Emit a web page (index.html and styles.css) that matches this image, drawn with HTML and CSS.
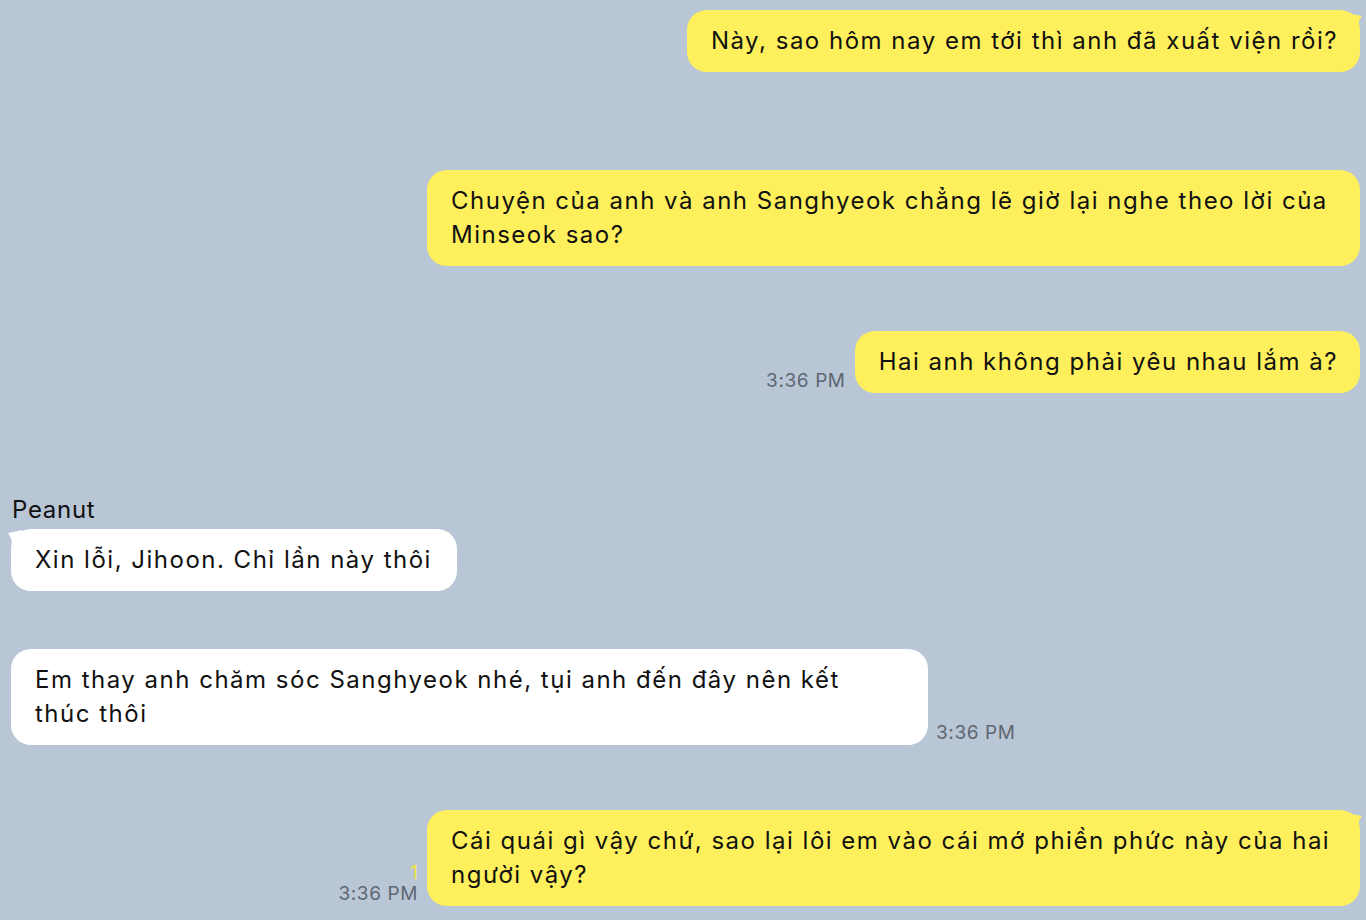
FILE: index.html
```html
<!DOCTYPE html>
<html lang="vi">
<head>
<meta charset="utf-8">
<title>Chat</title>
<link rel="stylesheet" href="styles.css">
</head>
<body>
<div class="chat">
  <div class="row out first">
    <div class="bubble yellow">Này, sao hôm nay em tới thì anh đã xuất viện rồi?
      <svg class="tail tr" width="16" height="20" viewBox="0 0 16 20"><path d="M0 0 Q8 2 14 3 Q10 8 10 16 L10 20 L0 20 Z" fill="#fdf05c"/></svg>
    </div>
  </div>
  <div class="row out gap-98">
    <div class="bubble yellow">Chuyện của anh và anh Sanghyeok chẳng lẽ giờ lại nghe theo lời của Minseok sao?</div>
  </div>
  <div class="row out gap-65">
    <div class="meta"><span class="time">3:36 PM</span></div>
    <div class="bubble yellow">Hai anh không phải yêu nhau lắm à?</div>
  </div>

  <div class="sender gap-103">Peanut</div>
  <div class="row in">
    <div class="bubble white">Xin lỗi, Jihoon. Chỉ lần này thôi
      <svg class="tail tl" width="16" height="20" viewBox="0 0 16 20"><path d="M16 0 Q8 2 2 3 Q6 8 6 16 L6 20 L16 20 Z" fill="#ffffff"/></svg>
    </div>
  </div>
  <div class="row in gap-59">
    <div class="bubble white">Em thay anh chăm sóc Sanghyeok nhé, tụi anh đến đây nên kết thúc thôi</div>
    <div class="meta left"><span class="time">3:36 PM</span></div>
  </div>

  <div class="row out gap-65">
    <div class="meta"><span class="read">1</span><span class="time">3:36 PM</span></div>
    <div class="bubble yellow">Cái quái gì vậy chứ, sao lại lôi em vào cái mớ phiền phức này của hai người vậy?
      <svg class="tail tr" width="16" height="20" viewBox="0 0 16 20"><path d="M0 0 Q8 2 14 3 Q10 8 10 16 L10 20 L0 20 Z" fill="#fdf05c"/></svg>
    </div>
  </div>
</div>
</body>
</html>
```

FILE: styles.css
```css
html, body {
  margin: 0;
  padding: 0;
  background: #b9c6d6;
}
body {
  width: 1366px;
  height: 920px;
  overflow: hidden;
  font-family: Inter, "Noto Sans", "Liberation Sans", sans-serif;
  color: #111;
}
.chat {
  display: flex;
  flex-direction: column;
  padding: 10px 6px 0 11px;
}
.row {
  display: flex;
  align-items: flex-end;
  gap: 9px;
}
.row.out { justify-content: flex-end; }
.row.in { justify-content: flex-start; gap: 8px; }
.gap-98 { margin-top: 98px; }
.gap-65 { margin-top: 65px; }
.gap-59 { margin-top: 58px; }
.gap-103 { margin-top: 102px; }

.bubble {
  position: relative;
  box-sizing: border-box;
  max-width: 933px;
  padding: 14px 22px 14px 24px;
  border-radius: 20px;
  font-size: 24px;
  line-height: 34px;
  letter-spacing: 1.5px;
}
.row.in .bubble {
  max-width: 917px;
  padding-right: 25px;
}
.bubble.yellow { background: #fdf05c; }
.bubble.white { background: #ffffff; }

.tail {
  position: absolute;
  top: 0;
}
.tail.tr { right: -4px; top: 3px; }
.tail.tl { left: -5px; top: 1px; }

.meta {
  display: flex;
  flex-direction: column;
  align-items: flex-end;
  padding-bottom: 1px;
}
.meta.left { align-items: flex-start; }
.time {
  font-size: 19px;
  line-height: 22px;
  letter-spacing: 0.6px;
  color: #5e6671;
}
.read {
  font-size: 19px;
  line-height: 20px;
  color: #f6e84a;
}
.sender {
  font-size: 24px;
  line-height: 30px;
  letter-spacing: 0.7px;
  padding-left: 1px;
  margin-bottom: 4px;
  color: #111;
}
```
